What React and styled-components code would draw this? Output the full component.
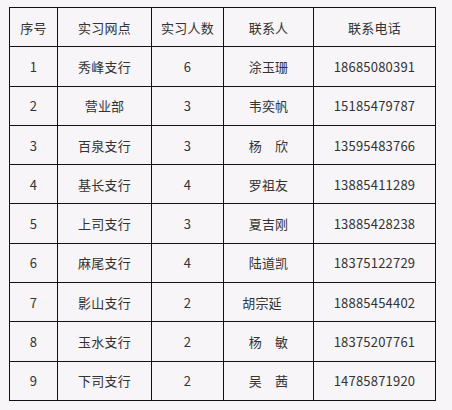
import React from 'react';
import styled, { createGlobalStyle } from 'styled-components';

const GlobalStyle = createGlobalStyle`
  html, body {
    margin: 0;
    padding: 0;
    background: #f7f5f7;
  }
  body {
    font-family: "Noto Sans CJK SC", "Noto Sans", sans-serif;
    color: #333;
  }
`;

const Page = styled.div`
  padding: 7px 0 0 9px;
`;

const Table = styled.table`
  border-collapse: collapse;
  table-layout: fixed;
  width: 427px;
  font-size: 13px;
`;

const Row = styled.tr`
  height: 39.3px;
`;

const Cell = styled.td`
  border: 1px solid #111;
  text-align: center;
  vertical-align: middle;
  padding: 0 ${(p) => (p.$nudge ? `${p.$nudge}px` : '0')} 0 0;
  white-space: nowrap;
  line-height: 1;
  letter-spacing: 0.2px;
`;

const cols = [48, 94, 72, 90, 122];
const head = ['序号', '实习网点', '实习人数', '联系人', '联系电话'];

const rows = [
  ['1', '秀峰支行', '6', '涂玉珊', '18685080391'],
  ['2', '营业部', '3', '韦奕帆', '15185479787'],
  ['3', '百泉支行', '3', '杨　欣', '13595483766'],
  ['4', '基长支行', '4', '罗祖友', '13885411289'],
  ['5', '上司支行', '3', '夏吉刚', '13885428238'],
  ['6', '麻尾支行', '4', '陆道凯', '18375122729'],
  ['7', '影山支行', '2', '胡宗延', '18885454402', 13],
  ['8', '玉水支行', '2', '杨　敏', '18375207761'],
  ['9', '下司支行', '2', '吴　茜', '14785871920'],
];

export default function App() {
  return (
    <Page>
      <GlobalStyle />
      <Table>
        <colgroup>
          {cols.map((w, i) => (
            <col key={i} style={{ width: w }} />
          ))}
        </colgroup>
        <tbody>
          <Row>
            {head.map((h) => (
              <Cell key={h}>{h}</Cell>
            ))}
          </Row>
          {rows.map(([no, branch, count, person, phone, nudge]) => (
            <Row key={no}>
              <Cell>{no}</Cell>
              <Cell>{branch}</Cell>
              <Cell>{count}</Cell>
              <Cell $nudge={nudge}>{person}</Cell>
              <Cell>{phone}</Cell>
            </Row>
          ))}
        </tbody>
      </Table>
    </Page>
  );
}
